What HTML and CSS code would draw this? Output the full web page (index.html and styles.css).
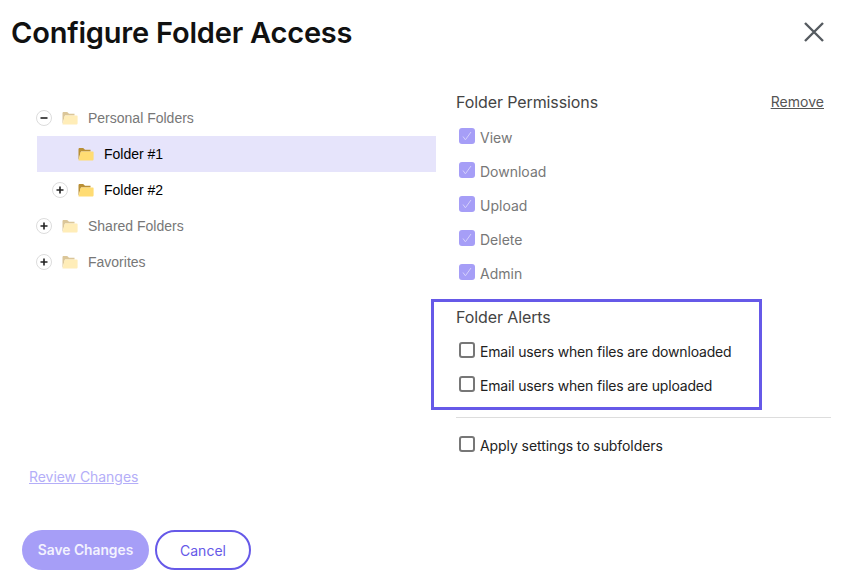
FILE: index.html
```html
<!DOCTYPE html>
<html lang="en">
<head>
<meta charset="utf-8">
<title>Configure Folder Access</title>
<link rel="stylesheet" href="styles.css">
</head>
<body>
<svg class="defs" width="0" height="0" aria-hidden="true">
  <symbol id="folder" viewBox="0 0 16 14">
    <path d="M0.5 13V2.2C0.5 1.5 1 1 1.7 1H5.2L7 2.8H12.5V4.5H3L0.5 13Z" fill="#b98f35"/>
    <path d="M0.5 13.5L2.6 5C2.7 4.6 3 4.4 3.4 4.4H14.6C15.3 4.4 15.7 4.9 15.6 5.5V12.2C15.6 13 15 13.5 14.3 13.5Z" fill="#ffdc73"/>
  </symbol>
  <symbol id="plus" viewBox="0 0 16 16">
    <circle cx="8" cy="8" r="7.5" fill="#fff" stroke="#dcdcdc"/>
    <path d="M4.5 8H11.5M8 4.5V11.5" stroke="#222" stroke-width="1.6"/>
  </symbol>
  <symbol id="minus" viewBox="0 0 16 16">
    <circle cx="8" cy="8" r="7.5" fill="#fff" stroke="#dcdcdc"/>
    <path d="M4.5 8H11.5" stroke="#222" stroke-width="1.6"/>
  </symbol>
  <symbol id="tick" viewBox="0 0 16 16">
    <path d="M4 8.5L6.4 11.8L12 4" fill="none" stroke="#d5d0fb" stroke-width="1"/>
  </symbol>
</svg>
<main class="page">
  <header class="header">
    <h1 class="title">Configure Folder Access</h1>
    <button class="close" aria-label="Close">
      <svg width="22" height="22" viewBox="0 0 22 22"><path d="M2 2L20 20M20 2L2 20" stroke="#555b60" stroke-width="2.4"/></svg>
    </button>
  </header>
  <div class="columns">
    <section class="left">
      <ul class="tree">
        <li class="node muted"><svg class="toggle"><use href="#minus"/></svg><svg class="folder faded"><use href="#folder"/></svg><span>Personal Folders</span></li>
        <li class="node selected child"><span class="toggle"></span><svg class="folder"><use href="#folder"/></svg><span>Folder #1</span></li>
        <li class="node child"><svg class="toggle"><use href="#plus"/></svg><svg class="folder"><use href="#folder"/></svg><span>Folder #2</span></li>
        <li class="node muted"><svg class="toggle"><use href="#plus"/></svg><svg class="folder faded"><use href="#folder"/></svg><span>Shared Folders</span></li>
        <li class="node muted"><svg class="toggle"><use href="#plus"/></svg><svg class="folder faded"><use href="#folder"/></svg><span>Favorites</span></li>
      </ul>
    </section>
    <section class="right">
      <div class="perm-head">
        <h2 class="heading">Folder Permissions</h2>
        <a class="remove" href="#">Remove</a>
      </div>
      <div class="check-row disabled"><span class="box on"><svg width="16" height="16"><use href="#tick"/></svg></span>View</div>
      <div class="check-row disabled"><span class="box on"><svg width="16" height="16"><use href="#tick"/></svg></span>Download</div>
      <div class="check-row disabled"><span class="box on"><svg width="16" height="16"><use href="#tick"/></svg></span>Upload</div>
      <div class="check-row disabled"><span class="box on"><svg width="16" height="16"><use href="#tick"/></svg></span>Delete</div>
      <div class="check-row disabled"><span class="box on"><svg width="16" height="16"><use href="#tick"/></svg></span>Admin</div>
      <div class="alerts">
        <h2 class="heading">Folder Alerts</h2>
        <div class="check-row"><span class="box"></span>Email users when files are downloaded</div>
        <div class="check-row"><span class="box"></span>Email users when files are uploaded</div>
      </div>
      <hr class="divider">
      <div class="check-row"><span class="box"></span>Apply settings to subfolders</div>
    </section>
  </div>
  <footer class="footer">
    <a class="review" href="#">Review Changes</a>
    <div class="actions">
      <button class="btn primary">Save Changes</button>
      <button class="btn outline">Cancel</button>
    </div>
  </footer>
</main>
</body>
</html>
```

FILE: styles.css
```css
* { box-sizing: border-box; }
html, body { margin: 0; padding: 0; background: #fff; }
.defs { position: absolute; }
.page {
  width: 849px;
  height: 585px;
  overflow: hidden;
  display: flex;
  flex-direction: column;
  font-family: "Inter", "Liberation Sans", sans-serif;
  color: #222;
}
.header {
  display: flex;
  justify-content: space-between;
  align-items: center;
  height: 64px;
  padding: 0 24px 0 11px;
}
.title {
  margin: 0;
  font-size: 29px;
  font-weight: 600;
  letter-spacing: -0.2px;
  color: #111;
}
.close {
  border: 0;
  background: none;
  padding: 0;
  width: 22px;
  height: 22px;
}
.close svg { display: block; }
.columns {
  display: flex;
  padding: 20px 18px 0 37px;
  flex: 1;
}
.left { width: 399px; padding-top: 16px; }
.tree { list-style: none; margin: 0; padding: 0; }
.node {
  display: flex;
  align-items: center;
  height: 36px;
  font-family: "Liberation Sans", Arial, sans-serif;
  font-size: 14px;
  color: #000;
}
.node.muted { color: #777; }
.node.selected { background: #e6e4fb; }
.node.child { padding-left: 16px; }
.toggle { width: 16px; height: 16px; margin: 0 10px 0 -1px; flex: none; }
.folder { width: 16px; height: 14px; margin-right: 10px; flex: none; }
.folder.faded { opacity: 0.5; }
.right { margin-left: 20px; width: 375px; }
.perm-head {
  display: flex;
  justify-content: space-between;
  align-items: center;
  height: 36px;
  padding-right: 7px;
}
.heading {
  margin: 0;
  font-size: 16px;
  font-weight: 400;
  letter-spacing: -0.1px;
  color: #444;
}
.remove {
  font-size: 14px;
  letter-spacing: 0.04px;
  margin-bottom: 1px;
  color: #555;
}
.check-row {
  display: flex;
  align-items: center;
  height: 34px;
  padding-left: 3px;
  font-size: 14px;
  letter-spacing: -0.08px;
  color: #222;
}
.check-row.disabled { color: #777; letter-spacing: 0; }
.box {
  width: 16px;
  height: 16px;
  margin: 0 5px 3px 0;
  border: 2px solid #777;
  border-radius: 3px;
  flex: none;
  background: #fff;
  display: flex;
  align-items: center;
  justify-content: center;
}
.box.on { border: 0; background: #a69ef7; }
.box svg { display: block; }
.alerts {
  margin: 9px 0 0 -25px;
  width: 331px;
  height: 111px;
  padding: 3px 0 0 22px;
  border: 3px solid #6659e8;
}
.alerts .heading { height: 29px; line-height: 24px; }
.alerts .check-row { margin-left: -3px; padding-left: 6px; letter-spacing: -0.17px; }
.divider {
  margin: 7px 0 10px;
  border: 0;
  border-top: 1px solid #ddd;
}
.footer {
  padding: 0 0 15px 22px;
}
.review {
  display: block;
  margin: 0 0 45px 7px;
  font-size: 14px;
  letter-spacing: -0.05px;
  color: #b4aef8;
}
.actions { display: flex; gap: 6px; }
.btn {
  height: 40px;
  border-radius: 20px;
  font-family: "Inter", "Liberation Sans", sans-serif;
  font-size: 14px;
  padding: 0;
}
.primary {
  width: 127px;
  border: 0;
  background: #a69ef7;
  color: #f3f2fe;
  font-weight: 600;
  font-size: 13.8px;
}
.outline {
  width: 96px;
  background: #fff;
  border: 2px solid #6659e8;
  color: #6659e8;
}
```
